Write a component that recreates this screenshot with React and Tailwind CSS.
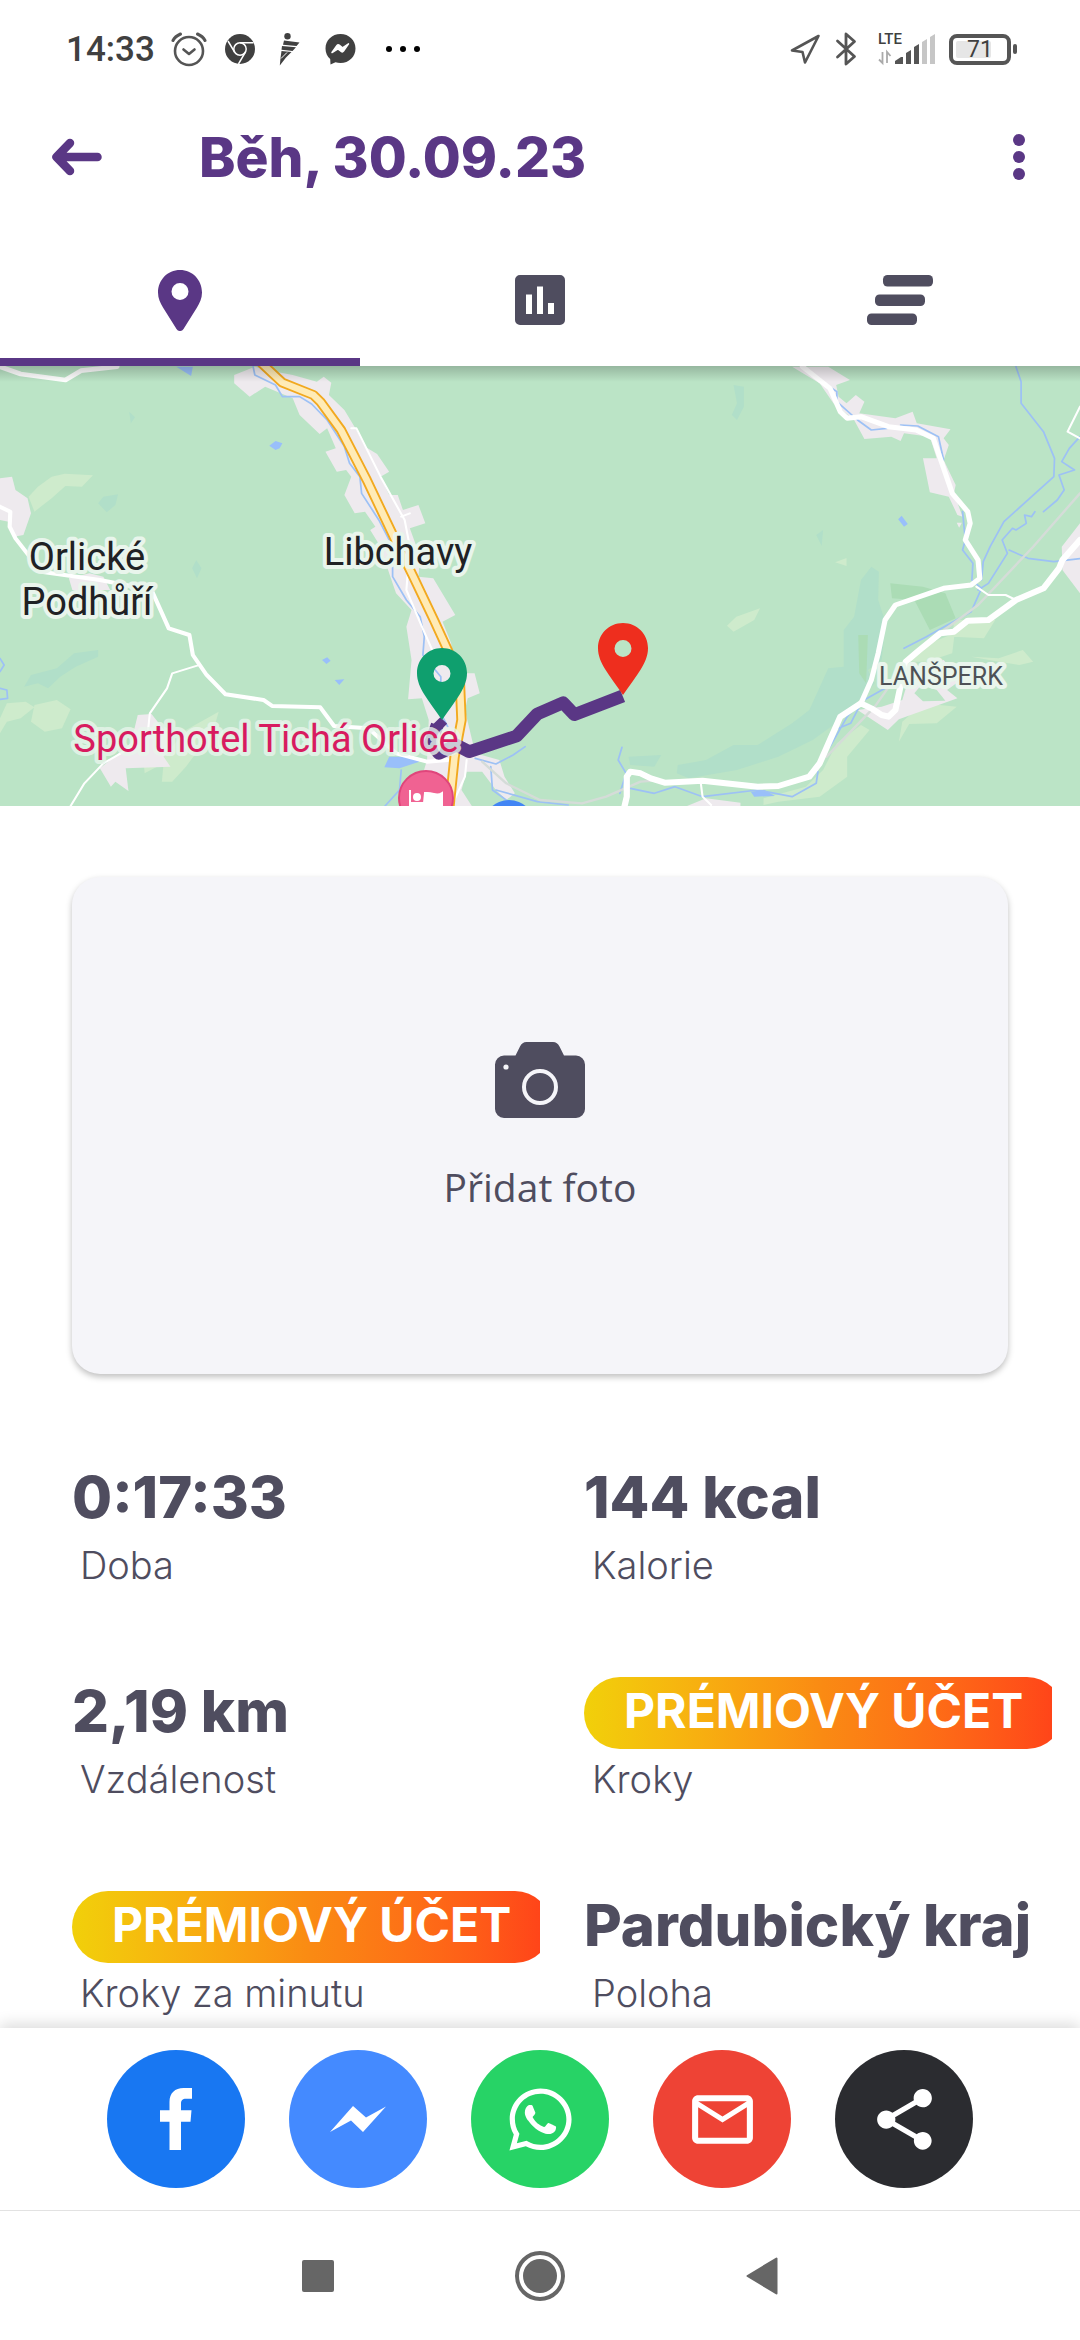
import React from "react";
import { FaWhatsapp } from "react-icons/fa";
import { MdMailOutline, MdShare } from "react-icons/md";

/* ---------- status bar ---------- */

function AlarmIcon() {
  return (
    <svg className="h-[36px] w-[36px]" viewBox="0 0 36 36" fill="none" stroke="#555" strokeWidth="2.6" strokeLinecap="round" strokeLinejoin="round">
      <circle cx="18" cy="20" r="14" />
      <path d="M12.5 18.5l5.5 4.5 5.5-4.5" />
      <path d="M2 9.5C3.5 6.5 6 4.500 9.500 3M34 9.500C32.500 6.500 30 4.500 26.500 3" strokeWidth="3" />
    </svg>
  );
}

function ChromeIcon() {
  return (
    <svg className="h-[30px] w-[30px]" viewBox="0 0 30 30">
      <circle cx="15" cy="15" r="15" fill="#404040" />
      <g fill="none" stroke="#fff" strokeWidth="1.5">
        <circle cx="15" cy="15" r="6.2" />
        <path d="M15 8.800H28.500M9.600 18.100L3 7M20.400 18.100L13.500 30" />
      </g>
    </svg>
  );
}

function RunnerIcon() {
  return (
    <svg className="h-[33px] w-[21px]" viewBox="0 0 21 33" fill="#404040">
      <circle cx="8.500" cy="3.300" r="3.200" />
      <path d="M5 7.500L20.500 9.500 17.500 13 4 11.800zM3 13L17 14.200 13.500 18 2.500 16.800zM2.500 18L12.500 19 7 24.500 .8 32.500 1.500 25z" />
      <path d="M2 25.500L8 19.500" stroke="#fff" strokeWidth="1" />
    </svg>
  );
}

function MessengerIcon() {
  return (
    <svg className="h-[32px] w-[31px]" viewBox="0 0 31 32">
      <path d="M15.500 1C7 1 .5 7.200.5 15.500c0 4.300 1.800 8 4.700 10.600L5.500 31.500l5-2.200c1.600.5 3.300.7 5 .7C24 30 30.500 23.800 30.500 15.500S24 1 15.500 1z" fill="#404040" />
      <path d="M7 19.500l5-7c.6-.8 1.400-.9 2.200-.3l3.300 2.600 6-4-5 7.300c-.6.8-1.500.9-2.300.3L13 15.800z" fill="#fff" stroke="#fff" strokeWidth="1.500" strokeLinejoin="round" />
    </svg>
  );
}

function StatusBar() {
  return (
    <div className="flex h-[98px] items-center justify-between pl-[66px] pr-[63px] text-[#404040]">
      <div className="flex items-center">
        <span className="font-['Roboto'] text-[35px] font-medium leading-none">14:33</span>
        <span className="ml-4 flex items-center gap-[18px]">
          <AlarmIcon />
          <ChromeIcon />
        </span>
        <span className="ml-6 flex items-center gap-[25px]">
          <RunnerIcon />
          <MessengerIcon />
        </span>
        <span className="ml-[30px] flex gap-2">
          <i className="h-1.5 w-1.5 rounded-full bg-black" />
          <i className="h-1.5 w-1.5 rounded-full bg-black" />
          <i className="h-1.5 w-1.5 rounded-full bg-black" />
        </span>
      </div>
      <div className="flex items-center">
        <svg className="h-[32px] w-[31px]" viewBox="0 0 31 32" fill="none" stroke="#555" strokeWidth="2.600" strokeLinejoin="round">
          <path d="M28.500 3L2 17.500l10.500 1.500L15 29.500z" />
        </svg>
        <svg className="ml-3.5 h-[36px] w-[23px]" viewBox="0 0 23 36" fill="none" stroke="#555" strokeWidth="2.800" strokeLinejoin="round" strokeLinecap="round">
          <path d="M2.500 10l17 15.500L11 33V3l8.500 7.500L2.500 26" />
        </svg>
        <div className="ml-5 grid h-[34px] w-[58px]">
          <span className="col-start-1 row-start-1 font-['Roboto'] text-[15px] font-medium leading-[15px]">LTE</span>
          <svg className="col-start-1 row-start-1 h-[34px] w-[58px]" viewBox="0 0 58 34">
            <path d="M4.500 20v11L1 27.500M9 31V20l3.500 4" fill="none" stroke="#aaa" strokeWidth="1.800" />
            <path d="M17 32v-3l6-4h2v7zM28 21l5-3v14h-5zM36 15l5-3v20h-5z" fill="#555" />
            <path d="M44 10l5-3v25h-5zM52 5l5-3v30h-5z" fill="#c6c6c6" />
          </svg>
        </div>
        <div className="ml-[13px] flex items-center gap-0.5">
          <div className="relative flex h-[31px] w-[62px] items-center justify-center rounded-lg border-4 border-[#555]">
            <i className="absolute left-[3px] top-[3px] h-[17px] w-[35px] rounded-xs bg-[#e6e6e6]" />
            <span className="relative font-['Roboto'] text-[23px] leading-none">71</span>
          </div>
          <i className="h-2.5 w-1 rounded-xs bg-[#555]" />
        </div>
      </div>
    </div>
  );
}

/* ---------- app bar and tabs ---------- */

function AppBar() {
  return (
    <header className="flex h-[118px] items-center pl-[51px] pr-[44px] text-[#5a3785]">
      <button type="button" aria-label="Zpět" className="flex h-16 w-[52px] items-center">
        <svg className="h-[38px] w-[52px]" viewBox="0 0 52 38" fill="none" stroke="currentColor" strokeWidth="8.500" strokeLinecap="round" strokeLinejoin="round">
          <path d="M19 5L5.500 19 19 33M6 19H46.500" />
        </svg>
      </button>
      <h1 className="ml-[96px] flex-1 whitespace-nowrap font-['Inter'] text-[55px] font-extrabold leading-[68px]">Běh, 30.09.23</h1>
      <button type="button" aria-label="Další možnosti" className="flex h-16 w-[34px] flex-col items-center justify-center gap-[5px]">
        <i className="h-[12px] w-[12px] rounded-full bg-[#5a3785]" />
        <i className="h-[12px] w-[12px] rounded-full bg-[#5a3785]" />
        <i className="h-[12px] w-[12px] rounded-full bg-[#5a3785]" />
      </button>
    </header>
  );
}

const PIN = "M25 0C11 0 0 11 0 25c0 8 3 14 7 21 5 8 11 16 18 26 7-10 13-18 18-26 4-7 7-13 7-21C50 11 39 0 25 0zm0 17a8.500 8.500 0 1 1 0 17 8.500 8.500 0 0 1 0-17z";

function Tabs() {
  const cls = "relative flex h-[150px] items-center justify-center pt-[18px]";
  return (
    <nav role="tablist" className="grid grid-cols-3">
      <button type="button" role="tab" aria-selected="true" aria-label="Mapa" className={cls}>
        <svg className="h-[62px] w-[44px]" viewBox="0 0 44 62" fill="#5a3785" fillRule="evenodd">
          <path d="M22 1C9.500 1 0 11 0 23.500c0 6 2.300 10.500 5 15L18.500 60c1.800 2.700 5.200 2.700 7 0L39 38.500c2.700-4.500 5-9 5-15C44 11 34.500 1 22 1zm0 13a8.500 8.500 0 1 1 0 17 8.500 8.500 0 0 1 0-17z" />
        </svg>
        <i className="absolute inset-x-0 bottom-0 h-2 bg-[#5a3785]" />
      </button>
      <button type="button" role="tab" aria-selected="false" aria-label="Grafy" className={cls}>
        <svg className="h-[50px] w-[50px]" viewBox="0 0 50 50" fill="#4f4d5f" fillRule="evenodd">
          <path d="M5 0H45a5 5 0 0 1 5 5V45a5 5 0 0 1-5 5H5a5 5 0 0 1-5-5V5a5 5 0 0 1 5-5zM11 19.500V39h6V19.500zM22 11.500V39h6V11.500zM33 28V39h6V28z" />
        </svg>
      </button>
      <button type="button" role="tab" aria-selected="false" aria-label="Mezičasy" className={cls}>
        <svg className="h-[50px] w-[66px]" viewBox="0 0 66 50" fill="#4f4d5f">
          <rect x="16" y="0" width="50" height="11.500" rx="4.500" />
          <rect x="8" y="19.500" width="50" height="11.500" rx="4.500" />
          <rect x="0" y="38.500" width="50" height="11.500" rx="4.500" />
        </svg>
      </button>
    </nav>
  );
}

/* ---------- map ---------- */

function RouteMap() {
  const label = { paintOrder: "stroke", stroke: "#e9f5ec", strokeWidth: 8, strokeLinejoin: "round" };
  return (
    <div className="relative h-[440px] w-full overflow-hidden bg-[#bbe4c6]">
      <svg className="block h-full w-full" viewBox="0 0 1080 440" preserveAspectRatio="xMidYMid slice" role="img" aria-label="Mapa trasy">
        <g transform="translate(0 -6) scale(.34439 .33333)" strokeLinejoin="round" strokeLinecap="round">
          {/* meadows */}
          <g fill="#ceebcc">
            <path d="M100 455L83 410 110 380 150 350 188 341 270 346 238 380 190 378 150 415zM0 1075L20 1030 75 1025 100 1042 60 1075 20 1085 0 1120zM100 1035L165 1020 205 1048 180 1105 130 1115 90 1085zM415 1185L500 1160 540 1110 635 1055 620 1110 540 1220 500 1265 470 1265 475 1210 420 1240z" />
            <path d="M2111 797L2138 770 2207 745 2190 780 2130 815zM2425 607L2458 594 2458 618zM2767 830L2770 780 2890 780 2857 835zM2610 1145L2620 1085 2680 1030 2778 1040 2720 1090 2640 1092zM2820 890L2900 895 2970 870 3000 905 2960 915 2900 905zM2635 905L2700 850 2772 820 2765 880 2690 905zM2217 1335V1315L2340 1280 2390 1230 2430 1150 2500 1095 2525 1110 2460 1190 2460 1250 2380 1310 2260 1325z" />
          </g>
          {/* woodland patches */}
          <g fill="#b1dfc9">
            <path d="M70 980L90 945 165 925 215 880 285 870 285 890 220 920 175 950 140 985 110 970zM285 430L300 410 343 403 335 435 310 457zM375 155L392 172 380 190zM570 600L585 625 572 655 558 625zM2130 75L2160 80 2160 140 2140 180 2125 165 2140 130zM2370 525L2390 510 2386 558zM2480 770L2500 660 2530 620 2552 635 2550 720 2572 790 2560 900 2520 930 2540 970 2440 1080 2360 1140 2260 1190 2140 1230 2000 1255 1965 1240 1968 1215 2050 1200 2130 1155 2200 1155 2300 1090 2350 1050 2405 925 2450 920 2450 810z" />
            <path d="M1825 1190L1920 1185 1900 1220 1830 1215z" />
          </g>
          <path d="M2585 670L2680 680 2745 700 2775 775 2700 810 2655 720 2590 715zM2492 825L2520 825 2515 970 2495 940z" fill="#abdcb5" />
          {/* built-up areas */}
          <g fill="#eeeaee">
            <path d="M0 355L35 350 45 390 80 415 90 460 68 525 40 530 25 485 0 480zM200 655L260 640 300 650 320 690 210 690zM290 1225L380 1150 400 1065 440 1062 500 1140 475 1190 495 1220 365 1225 373 1293 335 1265 322 1280z" />
            <path d="M680 45L740 20 800 35 850 45 920 65 940 50 962 68 955 105 1000 150 1035 210 1060 260 1095 282 1130 335 1105 350 1130 405 1155 405 1170 450 1215 435 1235 490 1190 505 1220 590 1215 650 1258 655 1322 765 1285 785 1310 850 1320 940 1378 940 1393 1000 1358 1015 1350 1050 1380 1180 1450 1200 1465 1250 1495 1300 1470 1320 1440 1290 1400 1235 1355 1235 1340 1290 1370 1338 1200 1338 1240 1200 1245 1080 1225 1015 1185 1018 1195 900 1180 800 1195 750 1150 700 1130 640 1105 560 1075 510 1090 500 1060 455 1030 460 1000 405 1020 350 1005 330 978 335 945 275 975 265 950 205 928 222 870 165 850 115 770 80 725 110 680 70z" />
            <path d="M2300 20L2405 20 2468 60 2428 75 2435 110 2458 130 2485 105 2510 125 2495 160 2600 175 2650 155 2662 190 2760 208 2740 235 2755 255 2740 300 2775 375 2770 400 2795 470 2780 465 2755 410 2700 397 2680 295 2720 295 2700 230 2625 220 2615 243 2588 230 2510 237 2480 180 2420 130 2380 70zM2778 488L2793 488 2785 503zM3136 490L3083 560 3085 630 3136 700zM2490 1050L2560 1040 2620 1020 2640 950 2690 910 2740 900 2790 960 2750 990 2780 1015 2610 1078 2578 1110zM1995 1338L2050 1315 2150 1328 2150 1338z" />
          </g>
          <path d="M2655 1000L2675 975 2720 990 2745 1022 2680 1024z" fill="#bbe4c6" />
          {/* rivers and ponds */}
          <g fill="#99bffa">
            <path d="M512 20H560L555 48zM782 257L800 243 820 250 812 265 800 270zM935 900L950 892 960 902 948 912zM972 960L1000 958 985 975zM1116 1222L1130 1190 1200 1190 1218 1205 1160 1225zM2608 478L2618 467 2636 492 2625 500zM2180 1295L2220 1290 2250 1308 2190 1310z" />
          </g>
          <g fill="none" stroke="#9dc1f5" strokeWidth="5">
            <path d="M735 20L740 45 800 75 820 110 870 110 905 132 950 180 1000 260 1015 310 1045 350 1050 400 1100 480 1140 560 1140 650 1180 720 1220 770 1232 830 1228 885 1280 950 1280 1060 1300 1100M1165 1230L1160 1290 1118 1338M0 895L12 915 0 935M0 985L20 990 22 1015 0 1018M1380 1195L1440 1212 1490 1185 1525 1160M1425 1220L1430 1290 1490 1335M1440 1290L1560 1325 1650 1335" />
            <path d="M2340 25L2380 60 2430 95 2430 125 2490 180 2530 210 2575 205M2615 195L2665 198 2725 230 2740 300M2795 455L2803 540 2795 570 2825 610 2822 660 2850 685 2820 755 2760 790 2690 830 2625 865M2950 20L2965 65 2965 130 3030 215 3062 295 3060 350 2915 485 2875 560 2855 605 2850 660M3136 230L3105 265 3083 305 3120 330 3075 345 3090 390 3070 420 3030 455M3005 455L2995 470 2975 465 2980 490 2950 510 2940 505 2910 540 2925 580 2870 670 2840 690M2930 570L2985 595 3060 605 3136 596M2570 985L2500 1025 2460 1070 2410 1160M2500 1030L2470 1090 2435 1105M1806 1162L1795 1200 1818 1240 1800 1300M1830 1285L1900 1300 1960 1280 2040 1310 2200 1290 2300 1310 2370 1270 2375 1235" />
          </g>
          {/* railway */}
          <path d="M3136 400L3000 560 2840 735 2650 880 2540 1040 2400 1190M1568 1320L1690 1330 1760 1310 1860 1265 1900 1262M1400 1205L1470 1270 1568 1320" fill="none" stroke="#d5dcd8" strokeWidth="7" />
          {/* local roads */}
          <g fill="none" stroke="#fff">
            <path d="M575 916L500 940 485 985 435 1060 430 1110M385 1160L300 1210 245 1270 205 1338M1020 205L1035 205 1105 350 1175 480 1190 560 1180 690 1225 800 1255 870M1165 470L1190 460M1355 1200L1350 1250 1315 1330M3136 140L3100 215 3136 235M2835 680L2870 705 2920 705 2950 720M2035 1270L2040 1310 2065 1335" strokeWidth="6" />
            <path d="M0 440L30 455 28 500 45 535 120 635 290 660 440 690 490 805 550 825 560 885 600 945 655 1003 765 1020 790 1038 930 1042 970 1098 1070 1105 1150 1180 1240 1205 1300 1200" strokeWidth="12" />
            <path d="M0 20L60 42 190 60 235 32 340 20" strokeWidth="14" />
            <path d="M2330 20L2410 85 2440 155 2460 175 2500 170 2580 200 2660 210 2710 235 2735 310 2765 400 2810 455 2817 490 2803 540 2840 600 2845 655 2820 675 2740 685 2600 735 2570 780 2550 880 2530 960 2500 1030" strokeWidth="15" />
            <path d="M3136 540L3085 600 3075 625 3030 685 2950 720 2870 780 2810 782 2770 815 2730 820 2670 870 2630 905 2600 1050 2580 1070 2560 1065 2530 1045 2500 1030 2440 1070 2410 1140 2380 1210 2350 1250 2260 1278 2200 1280 2040 1262 1930 1268 1890 1255 1860 1240 1830 1235 1820 1250 1820 1310 1812 1345" strokeWidth="18" />
          </g>
          {/* main road */}
          <g fill="none">
            <path d="M760 10L820 68 910 105 930 125 990 210 1065 360 1150 545 1200 650 1260 780 1300 870 1335 960 1340 1080 1320 1190 1305 1340" stroke="#f2a91f" strokeWidth="30" />
            <path d="M760 10L820 68 910 105 930 125 990 210 1065 360 1150 545 1200 650 1260 780 1300 870 1335 960 1340 1080 1320 1190 1305 1340" stroke="#ffebb6" strokeWidth="19" />
          </g>
          {/* recorded run */}
          <path d="M1265 1085L1285 1105M1270 1095L1250 1150 1275 1180 1325 1155 1362 1175 1500 1128 1560 1062 1635 1028 1668 1064 1808 1008" fill="none" stroke="#5a3785" strokeWidth="38" strokeLinecap="butt" />
        </g>

        {/* points of interest */}
        <circle cx="426" cy="432" r="27" fill="#f06292" stroke="#e0457b" strokeWidth="2" />
        <path d="M410 424V440M425 427c9-1 11 4 17 0V440H410V437H424z" fill="#fff" stroke="#fff" strokeWidth="2" />
        <circle cx="417" cy="431" r="4" fill="#fff" />
        <circle cx="509" cy="460" r="26" fill="#4285f4" />

        <g fontFamily="Roboto, sans-serif" style={label}>
          <text x="87" y="204" fontSize="38" textAnchor="middle" fill="#202124">Orlické</text>
          <text x="87" y="249" fontSize="38" textAnchor="middle" fill="#202124">Podhůří</text>
          <text x="398" y="199" fontSize="38" textAnchor="middle" fill="#202124">Libchavy</text>
          <text x="266" y="386" fontSize="38" textAnchor="middle" fill="#d81b60" strokeOpacity=".8">Sporthotel Tichá Orlice</text>
          <text x="941" y="319" fontSize="25" textAnchor="middle" fill="#4d5156">LANŠPERK</text>
        </g>

        <path d={PIN} transform="translate(417 282)" fill="#0f9f6e" fillRule="evenodd" />
        <path d={PIN} transform="translate(598 257)" fill="#ee2e1e" fillRule="evenodd" />
      </svg>
      <i className="absolute inset-x-0 top-0 h-4 bg-linear-to-b from-black/20 to-transparent" />
    </div>
  );
}

/* ---------- photo card ---------- */

function PhotoCard() {
  return (
    <button
      type="button"
      className="mx-[72px] mt-[71px] flex h-[497px] flex-col items-center justify-center gap-[43px] rounded-[28px] bg-[#f5f5f9] pt-1 text-[#4f4d5f] shadow-[0_3px_6px_rgba(0,0,0,0.25)]"
    >
      <svg className="h-[76px] w-[90px]" viewBox="0 0 90 76">
        <path d="M9 13.500H20.500L25 4.500C26.500 1.500 28.500 0 31.500 0H58C61 0 63 1.500 64.500 4.500L69 13.500H81a9 9 0 0 1 9 9V67a9 9 0 0 1-9 9H9a9 9 0 0 1-9-9V22.500a9 9 0 0 1 9-9z" fill="#4f4d5f" />
        <circle cx="45" cy="45" r="16" fill="none" stroke="#f5f5f9" strokeWidth="4" />
        <circle cx="11" cy="25" r="2.600" fill="#f5f5f9" />
      </svg>
      <span className="font-['Open_Sans'] text-[39px] leading-[52px]">Přidat foto</span>
    </button>
  );
}

/* ---------- statistics ---------- */

const STATS = [
  { label: "Doba", value: "0:17:33" },
  { label: "Kalorie", value: "144 kcal" },
  { label: "Vzdálenost", value: "2,19 km" },
  { label: "Kroky", premium: true },
  { label: "Kroky za minutu", premium: true },
  { label: "Poloha", value: "Pardubický kraj" },
];

function Stat({ label, value, premium }) {
  return (
    <div className="flex min-w-0 flex-col-reverse">
      <dt className="pl-2 text-[38px] font-light leading-[60px]">{label}</dt>
      {premium ? (
        <dd className="h-[72px] overflow-hidden whitespace-nowrap">
          <button type="button" className="flex h-[72px] w-max items-center rounded-full bg-linear-to-r from-[#f1d00a] via-[#fa8a13] to-[#ff4019] px-10 pb-1 text-[48px] font-bold leading-[60px] text-white">
            PRÉMIOVÝ ÚČET
          </button>
        </dd>
      ) : (
        <dd className="h-[72px] whitespace-nowrap text-[58px] font-extrabold leading-[68px]">{value}</dd>
      )}
    </div>
  );
}

/* ---------- sharing and system navigation ---------- */

function ShareBar() {
  const base = "flex h-[138px] w-[138px] items-center justify-center rounded-full text-white";
  return (
    <div className="flex h-[183px] items-center justify-center gap-[44px] border-b border-[#e2e2e2]">
      <button type="button" aria-label="Facebook" className={base + " bg-[#1877f2]"}>
        <svg className="h-full w-full" viewBox="0 0 138 138" fill="currentColor">
          <path d="M62.500 100V71.700H53V60.300H62.500V52C62.500 43 68 38 76.500 38H85V48.700H79C75.500 48.700 74 50.500 74 53.500V60.300H84.500L83.500 71.700H74V100z" />
        </svg>
      </button>
      <button type="button" aria-label="Messenger" className={base + " bg-[#448aff]"}>
        <svg className="h-full w-full" viewBox="0 0 138 138" fill="currentColor">
          <path d="M41 82L64 56 77 67.500 97 56.500 74 82 62 70.500z" />
        </svg>
      </button>
      <button type="button" aria-label="WhatsApp" className={base + " bg-[#27d366]"}>
        <FaWhatsapp className="h-[71px] w-[71px]" />
      </button>
      <button type="button" aria-label="E-mail" className={base + " bg-[#ee4335]"}>
        <MdMailOutline className="h-[73px] w-[73px]" />
      </button>
      <button type="button" aria-label="Sdílet" className={base + " bg-[#2b2c30]"}>
        <MdShare className="h-[73px] w-[73px]" />
      </button>
    </div>
  );
}

function SystemNav() {
  const cls = "flex h-16 w-16 items-center justify-center";
  return (
    <div className="flex h-[129px] items-center justify-center gap-[158px]">
      <button type="button" aria-label="Poslední aplikace" className={cls}>
        <i className="h-8 w-8 rounded-xs bg-[#666]" />
      </button>
      <button type="button" aria-label="Domů" className={cls}>
        <i className="flex h-[50px] w-[50px] items-center justify-center rounded-full border-4 border-[#666]">
          <i className="h-[34px] w-[34px] rounded-full bg-[#666]" />
        </i>
      </button>
      <button type="button" aria-label="Zpět" className={cls}>
        <svg className="h-[38px] w-[32px]" viewBox="0 0 32 38" fill="#666" stroke="#666" strokeWidth="2" strokeLinejoin="round">
          <path d="M1.500 19L30.500 1.500V36.500z" />
        </svg>
      </button>
    </div>
  );
}

export default function App() {
  return (
    <div className="flex min-h-screen w-full flex-col bg-white font-['Inter',sans-serif] text-[#4f4d5f]">
      <StatusBar />
      <AppBar />
      <Tabs />
      <main className="flex flex-1 flex-col">
        <RouteMap />
        <PhotoCard />
        <dl className="mb-[5px] mt-[89px] grid grid-cols-2 gap-x-[44px] gap-y-[82px] pl-[72px] pr-7">
          {STATS.map((s) => (
            <Stat key={s.label} {...s} />
          ))}
        </dl>
      </main>
      <footer className="sticky bottom-0 bg-white shadow-[0_-4px_14px_rgba(0,0,0,0.14)]">
        <ShareBar />
        <SystemNav />
      </footer>
    </div>
  );
}
